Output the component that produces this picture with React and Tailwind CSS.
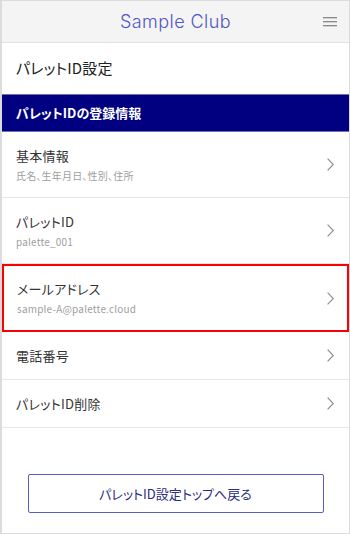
import React from "react";

const ROWS = [
  { title: "基本情報", sub: "氏名、生年月日、性別、住所" },
  { title: "パレットID", sub: "palette_001" },
  { title: "メールアドレス", sub: "sample-A@palette.cloud", active: true },
  { title: "電話番号" },
  { title: "パレットID削除" },
];

const Chevron = () => (
  <svg width="7" height="13" viewBox="0 0 7 13" fill="none" className="shrink-0">
    <path d="M0.6 0.6l5.7 5.9L0.6 12.4" stroke="#8a8a8a" strokeWidth="1.1" />
  </svg>
);

const Row = ({ title, sub, active }) => (
  <div
    className={
      active
        ? "flex items-center justify-between border-2 border-[#f00] pl-[13px] pr-[13px]"
        : "flex items-center justify-between border-b border-[#e6e6e6] pl-[14px] pr-[15px]"
    }
    style={{ height: active ? 68 : sub ? 66 : 48 }}
  >
    <div className="flex flex-col">
      <p className="text-[13px] leading-5 tracking-[0.02em] text-[#333]">{title}</p>
      {sub && (
        <p className="mt-[2px] text-[10px] leading-4 tracking-[0.02em] text-[#a0a0a0]">{sub}</p>
      )}
    </div>
    <Chevron />
  </div>
);

const App = () => (
  <div
    className="flex h-[534px] w-[350px] flex-col border border-l-2 border-[#dcdcdc] bg-white [font-feature-settings:'palt']"
    style={{ fontFamily: '"Noto Sans CJK JP", "Noto Sans", sans-serif' }}
  >
    <div className="relative flex h-[42px] items-center justify-center border-b border-[#e2e2e2] bg-[#f4f4f4]">
      <span
        className="text-[18px] font-light tracking-wide text-[#5056c6]"
        style={{ fontFamily: "Inter, sans-serif" }}
      >
        Sample Club
      </span>
      <svg width="14" height="10" viewBox="0 0 14 10" className="absolute right-[12px] top-[16px]">
        <path d="M0 0.75h14M0 4.75h14M0 8.75h14" stroke="#666" strokeWidth="1.2" />
      </svg>
    </div>
    <div className="flex h-[51px] items-center px-[14px] text-[15px] tracking-[0.01em] text-[#222]">
      パレットID設定
    </div>
    <div className="flex h-[38px] items-center border-y border-[#7070b0] bg-[#000080] px-[14px] text-[13px] font-bold text-white">
      パレットIDの登録情報
    </div>
    {ROWS.map((r) => (
      <Row key={r.title} {...r} />
    ))}
    <div className="flex flex-1 items-start justify-center pt-[46px]">
      <button className="flex h-[39px] w-[296px] items-center justify-center rounded-[2px] border border-[#5a5eb4] text-[13px] text-[#2a2d80]">
        パレットID設定トップへ戻る
      </button>
    </div>
  </div>
);

export default App;
